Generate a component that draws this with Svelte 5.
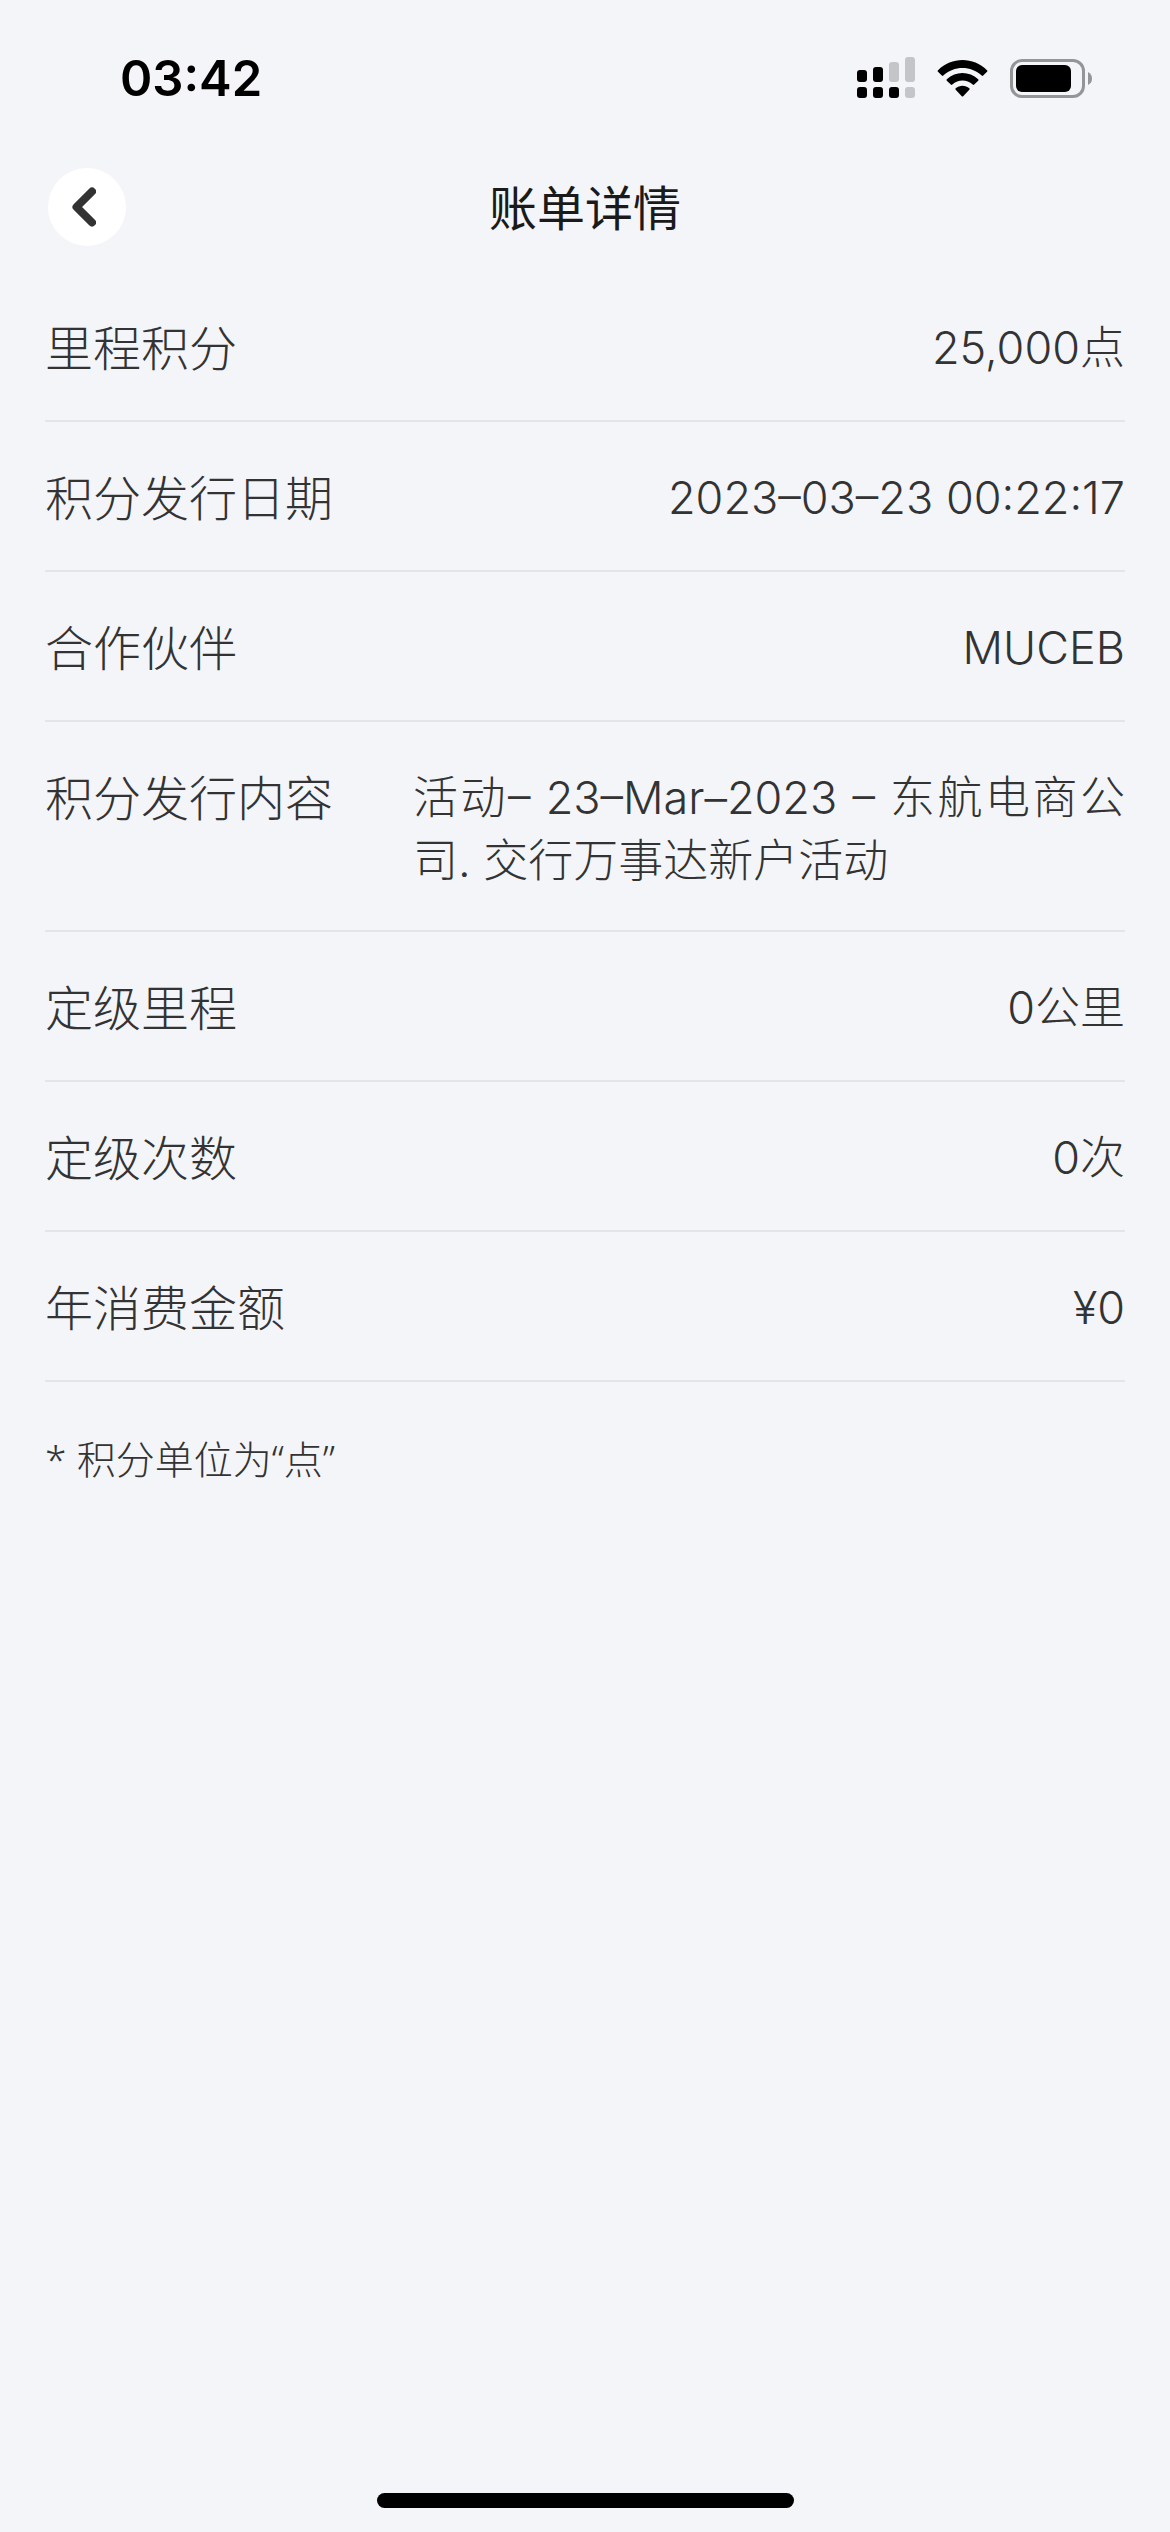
<script lang="ts">
  interface Row {
    label: string
    value: string
  }

  const rows: Row[] = [
    { label: '里程积分',     value: '25,000点' },
    { label: '积分发行日期', value: '2023–03–23 00:22:17' },
    { label: '合作伙伴',     value: 'MUCEB' },
    { label: '积分发行内容', value: '活动– 23–Mar–2023 – 东航电商公司. 交行万事达新户活动' },
    { label: '定级里程',     value: '0公里' },
    { label: '定级次数',     value: '0次' },
    { label: '年消费金额',   value: '¥0' },
  ]
</script>

<div class="screen">
  <div class="status">
    <span class="time">03:42</span>
    <div class="status-icons">
      <svg width="58" height="42" viewBox="0 0 58 42" aria-hidden="true">
        <rect x="0" y="13" width="10" height="12" rx="3" />
        <rect x="16" y="10" width="10" height="15" rx="3" />
        <rect class="off" x="32" y="5" width="10" height="20" rx="3" />
        <rect class="off" x="48" y="0" width="10" height="25" rx="3" />
        <rect x="0" y="30" width="10" height="11" rx="3" />
        <rect x="16" y="30" width="10" height="11" rx="3" />
        <rect x="32" y="30" width="10" height="11" rx="3" />
        <rect class="off" x="48" y="30" width="10" height="11" rx="3" />
      </svg>
      <svg width="51" height="37" viewBox="0 0 50 37" aria-hidden="true">
        <path d="M.5 10.2Q-.3 11 .5 11.8L4.3 15.6Q5 16.2 5.8 15.5C16.5 5.4 33.5 5.4 44.2 15.5Q45 16.2 45.7 15.6L49.5 11.8Q50.3 11 49.5 10.2C35.8-3.4 14.2-3.4.5 10.2Z" />
        <path d="M9.3 19.2Q8.6 20 9.3 20.7L13.3 24.6Q14 25.2 14.8 24.5C20.6 19.3 29.4 19.3 35.2 24.5Q36 25.2 36.7 24.6L40.7 20.7Q41.4 20 40.7 19.2C31.8 10.9 18.2 10.9 9.3 19.2Z" />
        <path d="M18.2 28.2Q17.4 29 18.2 29.8L24.3 36.2Q25 36.9 25.7 36.2L31.8 29.8Q32.6 29 31.8 28.2C28 24.8 22 24.8 18.2 28.2Z" />
      </svg>
      <svg width="82" height="39" viewBox="0 0 82 39" aria-hidden="true">
        <rect class="shell" x="1.5" y="1.5" width="72" height="36" rx="10.5" />
        <rect x="6" y="6" width="55" height="27" rx="6" />
        <path class="tip" d="M78 13Q82 15 82 19.5T78 26Z" />
      </svg>
    </div>
  </div>

  <header>
    <button class="back" type="button" aria-label="返回">
      <svg width="24" height="40" viewBox="0 0 24 40" aria-hidden="true">
        <path d="M20 4.5L4.5 20L20 35.5" />
      </svg>
    </button>
    <h1>账单详情</h1>
  </header>

  <main>
    <dl>
      {#each rows as row (row.label)}
        <div class="row">
          <dt>{row.label}</dt>
          <dd>{row.value}</dd>
        </div>
      {/each}
    </dl>
    <p class="note">* 积分单位为“点”</p>
  </main>

  <div class="home-bar"></div>
</div>

<style>
  :global(body) {
    margin: 0;
    background: #f4f5f9;
  }
  .screen {
    display: flex;
    flex-direction: column;
    box-sizing: border-box;
    min-height: 100vh;
    padding-bottom: 24px;
    font-family: Inter, 'Noto Sans CJK SC', sans-serif;
    font-weight: 300;
    color: #333;
  }
  .status {
    display: flex;
    align-items: center;
    justify-content: space-between;
    height: 156px;
    padding: 0 78px 0 120px;
  }
  .time {
    font-size: 49px;
    font-weight: 600;
    color: #000;
  }
  .status-icons {
    display: flex;
    align-items: center;
    gap: 22px;
  }
  .status-icons svg { display: block; }
  .off { fill: #c4c5c8; }
  .shell {
    fill: none;
    stroke: #949597;
    stroke-width: 3;
  }
  .tip { fill: #949597; }
  header {
    display: grid;
    grid-template-columns: 1fr auto 1fr;
    align-items: center;
    height: 102px;
    padding: 0 48px;
  }
  .back {
    display: flex;
    align-items: center;
    justify-content: center;
    width: 78px;
    height: 78px;
    padding: 0 6px 0 0;
    border: 0;
    border-radius: 50%;
    background: #fff;
  }
  .back path {
    fill: none;
    stroke: #333;
    stroke-width: 8;
    stroke-linecap: round;
    stroke-linejoin: round;
  }
  h1 {
    margin: 0;
    padding-top: 4px;
    font-size: 48px;
    font-weight: 400;
    line-height: 66px;
    color: #1a1a1a;
  }
  main {
    flex: 1;
    padding: 14px 45px 0;
  }
  dl { margin: 0; }
  .row {
    display: flex;
    align-items: flex-start;
    justify-content: space-between;
    gap: 80px;
    padding: 44px 0 38px;
    border-bottom: 2px solid #e4e5e7;
  }
  dt {
    flex: none;
    font-size: 48px;
    line-height: 66px;
  }
  dd {
    margin: 0;
    font-size: 45px;
    line-height: 63px;
    text-align: justify;
  }
  .note {
    margin: 48px 0 0;
    font-family: 'Noto Sans', 'Noto Sans CJK SC', sans-serif;
    font-size: 39px;
    line-height: 57px;
  }
  .home-bar {
    align-self: center;
    width: 417px;
    height: 15px;
    border-radius: 8px;
    background: #000;
  }
</style>
